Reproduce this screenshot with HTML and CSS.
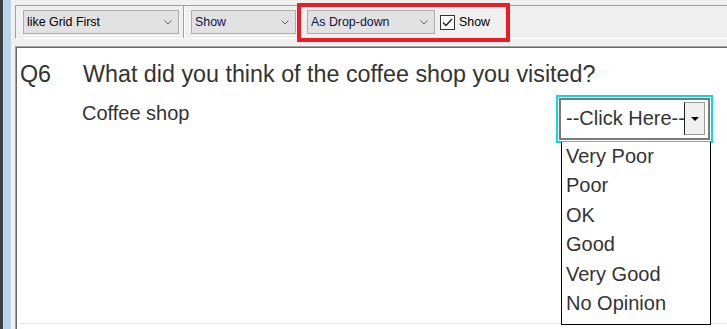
FILE: index.html
```html
<!DOCTYPE html>
<html lang="en">
<head>
  <meta charset="UTF-8">
  <title>Question Preview</title>
  <link rel="stylesheet" href="styles.css">
</head>
<body>

<div class="window">
  <div class="sidebar"></div>

  <div class="main">
    <div class="toolbar">
      <div class="combo combo-grid">
        <span>like Grid First</span>
        <svg class="chevron" width="8" height="5" viewBox="0 0 8 5"><polyline points="0.5,0.5 4,4 7.5,0.5" fill="none" stroke="#606060" stroke-width="1"/></svg>
      </div>
      <div class="separator"></div>
      <div class="combo combo-show navy">
        <span>Show</span>
        <svg class="chevron" width="8" height="5" viewBox="0 0 8 5"><polyline points="0.5,0.5 4,4 7.5,0.5" fill="none" stroke="#606060" stroke-width="1"/></svg>
      </div>
      <div class="highlight">
        <div class="combo combo-style navy">
          <span>As Drop-down</span>
          <svg class="chevron" width="8" height="5" viewBox="0 0 8 5"><polyline points="0.5,0.5 4,4 7.5,0.5" fill="none" stroke="#606060" stroke-width="1"/></svg>
        </div>
        <span class="checkbox">
          <svg width="13" height="13" viewBox="0 0 13 13"><polyline points="2,6.5 5,9.5 11,3" fill="none" stroke="#222" stroke-width="1.4"/></svg>
        </span>
        <span class="check-label">Show</span>
      </div>
    </div>

    <div class="content">
      <div class="question">
        <div class="q-head">
          <span class="q-num">Q6</span>
          <span class="q-text">What did you think of the coffee shop you visited?</span>
        </div>
        <div class="q-row">
          <span class="q-label">Coffee shop</span>
          <div class="dd">
            <div class="dd-field">
              <span class="dd-value">--Click Here--</span>
              <span class="dd-btn"><span class="dd-arrow"></span></span>
            </div>
            <ul class="dd-list">
              <li>Very Poor</li>
              <li>Poor</li>
              <li>OK</li>
              <li>Good</li>
              <li>Very Good</li>
              <li>No Opinion</li>
            </ul>
          </div>
        </div>
      </div>
    </div>
  </div>
</div>

</body>
</html>
```

FILE: styles.css
```css
body {
  margin: 0;
  font-family: 'Liberation Sans', Arial, sans-serif;
  background: #fff;
  overflow: hidden;
}

.window {
  display: flex;
  height: 329px;
  overflow: hidden;
}

/* Left frame strip */
.sidebar {
  flex: none;
  width: 12px;
  background: linear-gradient(to right, #3f3f3f 0 3px, #d6d6d6 3px 4px, #bcd3ec 4px 11px, #f7f7f7 11px 12px);
}

.main {
  flex: 1;
  display: flex;
  flex-direction: column;
  background: #f0f0f0;
  padding-left: 3px;
  min-width: 0;
}

/* Toolbar */
.toolbar {
  box-sizing: border-box;
  height: 34px;
  margin-top: 5px;
  border-top: 1px solid #a0a0a0;
  border-left: 1px solid #a0a0a0;
  border-bottom: 1px solid #fff;
  display: flex;
  align-items: center;
  padding-left: 7px;
}

.combo {
  box-sizing: border-box;
  height: 24px;
  background: #e1e1e1;
  border: 1px solid #adadad;
  display: flex;
  align-items: center;
  justify-content: space-between;
  padding: 0 6px 0 3px;
  font-size: 12.4px;
  color: #000;
}

.navy {
  color: #10104a;
}

.combo-grid {
  width: 156px;
}

.combo-show {
  width: 105px;
}

.combo-style {
  width: 128px;
}

.separator {
  align-self: stretch;
  width: 1px;
  background: #a0a0a0;
  border-right: 1px solid #fff;
  margin: 0 6px 0 4px;
}

.highlight {
  position: relative;
  display: flex;
  align-items: center;
  margin-left: 11px;
}

/* Red annotation frame */
.highlight::after {
  content: '';
  position: absolute;
  top: -7px;
  bottom: -8px;
  left: -10px;
  right: -20px;
  border: 4px solid #ed1c24;
}

.checkbox {
  box-sizing: border-box;
  width: 15px;
  height: 15px;
  margin-left: 5px;
  border: 1px solid #333;
  background: #fff;
  display: flex;
}

.check-label {
  margin-left: 4px;
  font-size: 12.4px;
  color: #000;
}

/* Question area */
.content {
  flex: 1;
  background: #fff;
  border-top: 1px solid #a0a0a0;
  border-left: 1px solid #a0a0a0;
  box-shadow: inset 1px 1px 0 #696969;
  margin-top: 7px;
  padding-left: 1px;
  padding-top: 1px;
}

.question {
  box-sizing: border-box;
  height: 276px;
  margin-left: 3px;
  padding-top: 13px;
  border-bottom: 1px solid #e3e3e3;
  color: #333;
}

.q-head {
  display: flex;
  font-size: 23.3px;
}

.q-num {
  width: 63px;
}

.q-row {
  display: flex;
  align-items: flex-start;
  margin-top: 7px;
}

.q-label {
  margin-left: 62px;
  padding-top: 7px;
  font-size: 20px;
}

/* Drop-down */
.dd {
  position: relative;
  box-sizing: border-box;
  width: 157px;
  height: 48px;
  margin-left: auto;
  margin-right: 14px;
  border: 2px solid #00dfe6;
  padding: 1px;
  background: #fff;
}

.dd-field {
  box-sizing: border-box;
  height: 100%;
  border: 2px solid #7a7a7a;
  display: flex;
  align-items: center;
  padding: 0 3px 1px 5px;
  overflow: hidden;
}

.dd-value {
  flex: 1;
  white-space: nowrap;
  overflow: hidden;
  font-size: 20px;
  color: #333;
}

.dd-btn {
  flex: none;
  box-sizing: border-box;
  width: 21px;
  height: 33px;
  background: #f0f0f0;
  border: 1px solid #9a9a9a;
  border-left: 1px solid #222;
  display: flex;
  align-items: center;
  justify-content: center;
}

.dd-arrow {
  width: 0;
  height: 0;
  border-left: 4px solid transparent;
  border-right: 4px solid transparent;
  border-top: 4px solid #000;
}

.dd-list {
  position: absolute;
  top: calc(100% + 1px);
  left: 3px;
  box-sizing: border-box;
  width: 150px;
  margin: 0;
  padding: 0 0 6px 4px;
  list-style: none;
  background: #fff;
  border: 1px solid #000;
  border-top: none;
  font-size: 20px;
  line-height: 29.4px;
  color: #333;
}
```
